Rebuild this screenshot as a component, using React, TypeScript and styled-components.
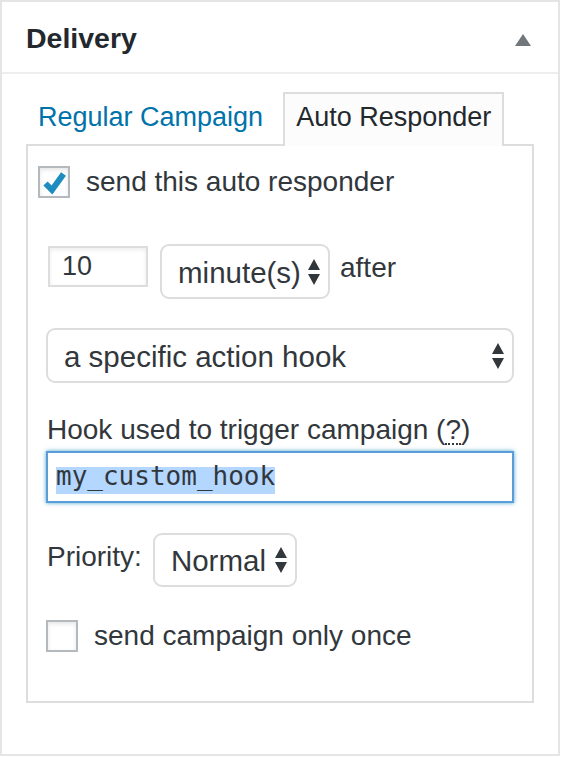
import React from 'react'
import styled, { createGlobalStyle } from 'styled-components'

const GlobalStyle = createGlobalStyle`
  html, body {
    margin: 0;
    padding: 0;
    background: #fff;
  }
  body {
    font-family: "Liberation Sans", Arial, sans-serif;
    color: #32373c;
  }
  * {
    box-sizing: border-box;
  }
`

const Postbox = styled.div`
  width: 560px;
  height: 756px;
  border: 2px solid #e5e5e5;
  background: #fff;
  display: flex;
  flex-direction: column;
`

const Header = styled.div`
  height: 72px;
  padding: 2px 27px 0 24px;
  border-bottom: 2px solid #eee;
  display: flex;
  align-items: center;
  justify-content: space-between;
`

const Title = styled.h2`
  margin: 0;
  font-size: 28.5px;
  font-weight: bold;
  color: #23282d;
`

const Inside = styled.div`
  flex: 1;
  display: flex;
  flex-direction: column;
  padding: 18px 24px 51px 24px;
`

const Tabs = styled.div`
  display: flex;
  align-items: flex-end;
  gap: 8px;
  margin-bottom: -2px;
  position: relative;
  z-index: 1;
`

const Tab = styled.div<{ $active?: boolean }>`
  height: 54px;
  line-height: 46px;
  padding: 0 ${({ $active }) => ($active ? 11 : 10)}px;
  font-size: 27px;
  border: 2px solid ${({ $active }) => ($active ? '#ddd' : 'transparent')};
  border-bottom: 0;
  background: ${({ $active }) => ($active ? '#fcfcfc' : 'transparent')};
  color: ${({ $active }) => ($active ? '#23282d' : '#0073aa')};
  white-space: nowrap;
`

const Panel = styled.div`
  flex: 1;
  display: flex;
  flex-direction: column;
  border: 2px solid #ddd;
  background: #fff;
  padding: 20px 18px 0 18px;
`

const Row = styled.div<{ $mt?: number; $ml?: number }>`
  display: flex;
  align-items: flex-start;
  margin-top: ${({ $mt }) => $mt || 0}px;
  margin-left: ${({ $ml }) => $ml || 0}px;
`

const CheckRow = styled.label<{ $mt?: number; $ml?: number }>`
  display: flex;
  align-items: center;
  gap: 16px;
  margin-top: ${({ $mt }) => $mt || 0}px;
  margin-left: ${({ $ml }) => $ml || 0}px;
`

const Checkbox = styled.span`
  width: 32px;
  height: 32px;
  flex: none;
  border: 2px solid #b4b9be;
  background: #fff;
  box-shadow: inset 0 2px 4px rgba(0, 0, 0, 0.1);
  display: flex;
  align-items: center;
  justify-content: center;
`

const Text = styled.span<{ $mt?: number; $ml?: number }>`
  font-size: 28px;
  line-height: 32px;
  white-space: nowrap;
  margin-top: ${({ $mt }) => $mt || 0}px;
  margin-left: ${({ $ml }) => $ml || 0}px;
`

const Abbr = styled.span`
  border-bottom: 2px dotted #32373c;
  line-height: 26px;
  display: inline-block;
`

const NumberInput = styled.div`
  width: 100px;
  height: 41px;
  margin-top: 2px;
  border: 2px solid #ddd;
  box-shadow: inset 0 2px 4px rgba(0, 0, 0, 0.07);
  padding-left: 12px;
  font-size: 27px;
  line-height: 37px;
  color: #32373c;
`

const Select = styled.div<{ $width?: number; $height?: number; $ml?: number }>`
  width: ${({ $width }) => ($width ? `${$width}px` : '100%')};
  height: ${({ $height }) => $height || 55}px;
  margin-left: ${({ $ml }) => $ml || 0}px;
  border: 2px solid #ddd;
  border-radius: 9px;
  background: #fff;
  display: flex;
  align-items: center;
  padding: 0 8px 0 16px;
  font-size: 29.5px;
  color: #32373c;
  white-space: nowrap;
  overflow: hidden;
`

const SelectValue = styled.span`
  flex: 1;
  line-height: 36px;
  padding-top: 2px;
`

const HookInput = styled.div`
  height: 52px;
  margin-top: 5px;
  border: 2px solid #5b9dd9;
  box-shadow: 0 0 4px rgba(30, 140, 190, 0.8);
  padding: 14px 0 0 8px;
`

const Selected = styled.span`
  display: inline-block;
  font-family: "DejaVu Sans Mono", "Liberation Mono", monospace;
  font-size: 26px;
  line-height: 18px;
  padding-bottom: 9px;
  background: #b3d7fe;
  color: #32373c;
`

const SortArrows = () => (
  <svg width="12" height="26" viewBox="0 0 12 26">
    <polygon points="0,11 6,0 12,11" fill="#32373c" />
    <polygon points="0,15 12,15 6,26" fill="#32373c" />
  </svg>
)

const Check = () => (
  <svg width="28" height="28" viewBox="0 0 28 28">
    <polyline
      points="5.5,15.5 12,22 23.5,6"
      fill="none"
      stroke="#1e8cbe"
      strokeWidth="6"
    />
  </svg>
)

const App: React.FC = () => {
  return (
    <>
      <GlobalStyle />
      <Postbox>
        <Header>
          <Title>Delivery</Title>
          <svg width="16" height="12" viewBox="0 0 16 12" style={{ marginTop: 4 }}>
            <polygon points="0,12 8,0 16,12" fill="#72777c" />
          </svg>
        </Header>
        <Inside>
          <Tabs>
            <Tab>Regular Campaign</Tab>
            <Tab $active>Auto Responder</Tab>
          </Tabs>
          <Panel>
            <CheckRow $ml={-8}>
              <Checkbox>
                <Check />
              </Checkbox>
              <Text>send this auto responder</Text>
            </CheckRow>

            <Row $mt={46} $ml={2}>
              <NumberInput>10</NumberInput>
              <Select $width={170} $ml={12}>
                <SelectValue>minute(s)</SelectValue>
                <SortArrows />
              </Select>
              <Text $mt={8} $ml={10}>
                after
              </Text>
            </Row>

            <Row $mt={29}>
              <Select>
                <SelectValue>a specific action hook</SelectValue>
                <SortArrows />
              </Select>
            </Row>

            <Text $mt={31} $ml={1}>
              Hook used to trigger campaign (<Abbr>?</Abbr>)
            </Text>
            <HookInput>
              <Selected>my_custom_hook</Selected>
            </HookInput>

            <Row $mt={30}>
              <Text $mt={8} $ml={1}>
                Priority:
              </Text>
              <Select $width={144} $height={54} $ml={11}>
                <SelectValue>Normal</SelectValue>
                <SortArrows />
              </Select>
            </Row>

            <CheckRow $mt={33}>
              <Checkbox />
              <Text>send campaign only once</Text>
            </CheckRow>
          </Panel>
        </Inside>
      </Postbox>
    </>
  )
}

export default App
